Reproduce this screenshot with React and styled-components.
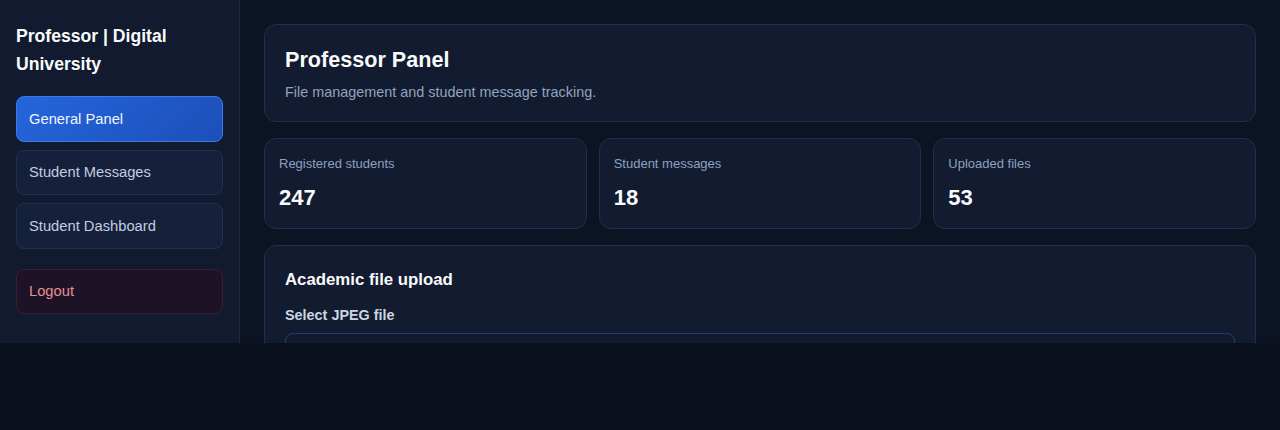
import React from "react";
import styled, { createGlobalStyle } from "styled-components";

const GlobalStyle = createGlobalStyle`
  * { box-sizing: border-box; }
  body {
    margin: 0;
    background: #0a101c;
    font-family: "Liberation Sans", Arial, sans-serif;
    color: #f1f5f9;
  }
`;

const Layout = styled.div`
  display: flex;
  height: 343px;
  overflow: hidden;
  background: #0c1322;
`;

const Sidebar = styled.aside`
  width: 240px;
  flex-shrink: 0;
  background: #111a2e;
  border-right: 1px solid #1c2840;
  padding: 22px 16px;
  display: flex;
  flex-direction: column;
`;

const Brand = styled.h2`
  margin: 0 0 18px;
  font-size: 17.6px;
  line-height: 28px;
  font-weight: 700;
  color: #f8fafc;
`;

const Nav = styled.nav`
  display: flex;
  flex-direction: column;
  gap: 8px;
`;

const NavButton = styled.button`
  height: 45.5px;
  width: 100%;
  text-align: left;
  padding: 0 12px;
  border-radius: 8px;
  font-family: inherit;
  font-size: 14.72px;
  cursor: pointer;
  border: 1px solid ${({ $active }) => ($active ? "#3b7be8" : "#1f3152")};
  background: ${({ $active }) =>
    $active ? "linear-gradient(135deg, #2466dc, #1d4fb8)" : "#15213a"};
  color: ${({ $active }) => ($active ? "#eff5ff" : "#c3cde0")};
`;

const LogoutButton = styled(NavButton)`
  margin-top: 12px;
  background: #1e1326;
  border-color: #3a1e36;
  color: #e48f93;
`;

const Main = styled.main`
  flex: 1;
  padding: 24px;
  display: flex;
  flex-direction: column;
  gap: 16px;
`;

const Card = styled.section`
  background: #121b2f;
  border: 1px solid #1f2f4d;
  border-radius: 12px;
  padding: 20px;
`;

const PageTitle = styled.h1`
  margin: 0;
  font-size: 21.6px;
  line-height: 30px;
  font-weight: 700;
  color: #f8fafc;
`;

const Subtitle = styled.p`
  margin: 8px 0 0;
  font-size: 14.4px;
  line-height: 18px;
  color: #93a3bf;
`;

const Stats = styled.div`
  display: grid;
  grid-template-columns: repeat(3, 1fr);
  gap: 12px;
`;

const StatCard = styled(Card)`
  height: 91px;
  padding: 17px 14px 14px;
`;

const StatLabel = styled.div`
  font-size: 13px;
  line-height: 16px;
  color: #8fa0bf;
`;

const StatValue = styled.div`
  margin-top: 12px;
  font-size: 22px;
  line-height: 28px;
  font-weight: 700;
  color: #f8fafc;
`;

const SectionTitle = styled.h3`
  margin: 2px 0 14px;
  font-size: 16.8px;
  line-height: 24px;
  font-weight: 700;
  color: #f8fafc;
`;

const FieldLabel = styled.label`
  display: block;
  font-size: 14.4px;
  line-height: 18px;
  font-weight: 700;
  color: #cbd5e1;
  margin-bottom: 9px;
`;

const FileBox = styled.div`
  height: 44px;
  border: 1px solid #23406b;
  border-radius: 8px;
  background: #111a2e;
`;

const stats = [
  { label: "Registered students", value: 247 },
  { label: "Student messages", value: 18 },
  { label: "Uploaded files", value: 53 },
];

export default function App() {
  return (
    <>
      <GlobalStyle />
      <Layout>
        <Sidebar>
          <Brand>Professor | Digital University</Brand>
          <Nav>
            <NavButton $active>General Panel</NavButton>
            <NavButton>Student Messages</NavButton>
            <NavButton>Student Dashboard</NavButton>
            <LogoutButton>Logout</LogoutButton>
          </Nav>
        </Sidebar>
        <Main>
          <Card>
            <PageTitle>Professor Panel</PageTitle>
            <Subtitle>File management and student message tracking.</Subtitle>
          </Card>
          <Stats>
            {stats.map((s) => (
              <StatCard key={s.label}>
                <StatLabel>{s.label}</StatLabel>
                <StatValue>{s.value}</StatValue>
              </StatCard>
            ))}
          </Stats>
          <Card>
            <SectionTitle>Academic file upload</SectionTitle>
            <FieldLabel>Select JPEG file</FieldLabel>
            <FileBox />
          </Card>
        </Main>
      </Layout>
    </>
  );
}
